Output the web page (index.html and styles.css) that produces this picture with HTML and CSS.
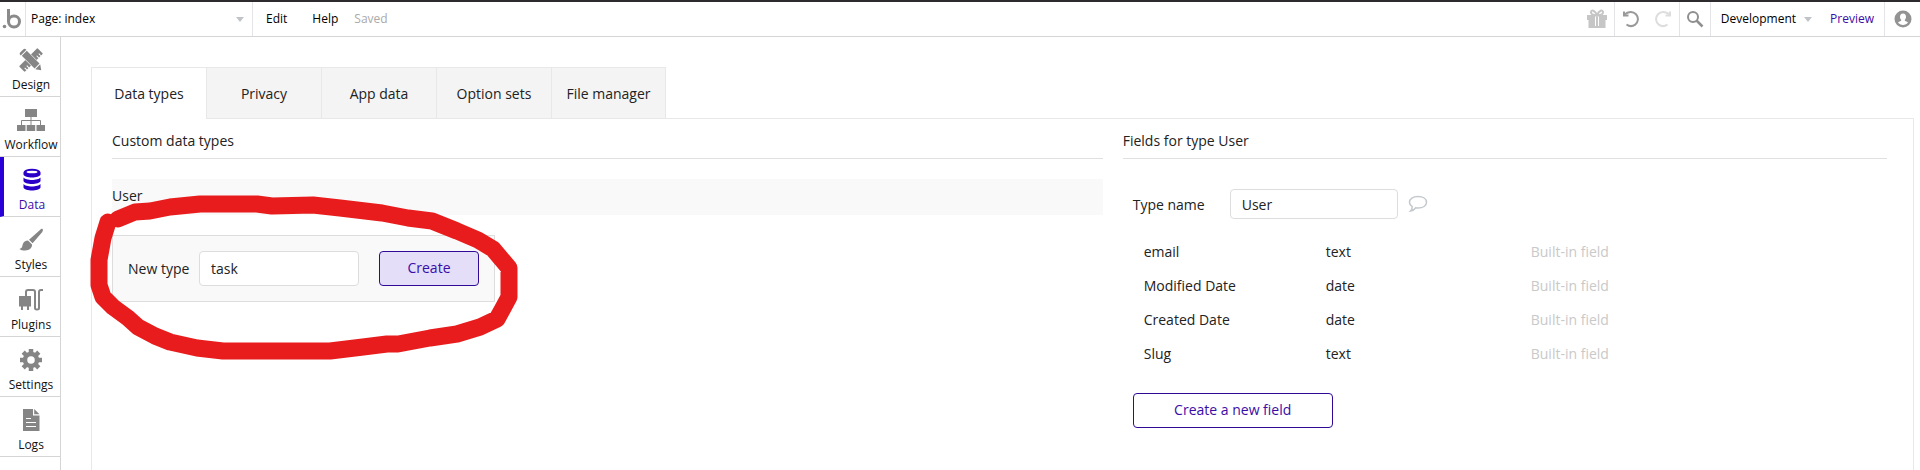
FILE: index.html
```html
<!DOCTYPE html>
<html lang="en">
<head>
<meta charset="utf-8">
<title>Data</title>
<link rel="stylesheet" href="styles.css">
</head>
<body>
<header class="topbar">
  <a class="logo" href="#" aria-label="Home">
    <svg width="20" height="20" viewBox="0 0 20 20" fill="none" stroke="#8a8a8a" stroke-width="3"><circle cx="12" cy="12.500" r="5.500"/><path d="M6.500 0v13"/><circle cx="2.500" cy="17.500" r="1.800" fill="#8a8a8a" stroke="none"/></svg>
  </a>
  <button class="page-picker" type="button">Page: index<span class="caret"></span></button>
  <nav class="menu">
    <a href="#">Edit</a>
    <a href="#">Help</a>
    <span class="saved">Saved</span>
  </nav>
  <div class="tools">
    <button class="tool gift" type="button" aria-label="Gift">
      <svg width="22" height="20" viewBox="0 0 22 20" fill="#c6c6c6"><path d="M1 6h20v5H1zM2.500 11h17v8h-17z"/><path fill="#fff" d="M9 7.500h4v9.500H9z"/><path d="M10 7.500h2v9.500h-2z"/><path fill="none" stroke="#c6c6c6" stroke-width="2" d="M11 6C9 1.500 5 0 5 3.500 5 5.500 8 6 11 6c3 0 6-.5 6-2.500C17 0 13 1.500 11 6z"/></svg>
    </button>
    <div class="tool-pair">
      <button class="tool" type="button" aria-label="Undo">
        <svg width="18" height="18" viewBox="0 0 18 18" fill="none" stroke="#999" stroke-width="2"><path d="M2.500 4.500C6 1.500 11 1 14 4.200c3 3.300 2.300 8-.8 10.400C10.600 16.500 7 16.300 4.500 14.500"/><path d="M2 1.500v4h4.500"/></svg>
      </button>
      <button class="tool" type="button" aria-label="Redo">
        <svg width="18" height="18" viewBox="0 0 18 18" fill="none" stroke="#ddd" stroke-width="2"><path d="M15.500 4.500C12 1.500 7 1 4 4.200 1 7.500 1.700 12.200 4.800 14.600c2.600 1.900 6.200 1.700 8.700-.1"/><path d="M16 1.500v4h-4.500"/></svg>
      </button>
    </div>
    <button class="tool search" type="button" aria-label="Search">
      <svg width="18" height="18" viewBox="0 0 18 18" fill="none" stroke="#8f8f8f"><circle cx="7" cy="7" r="5" stroke-width="2"/><path d="M10.500 10.500 16.500 16.500" stroke-width="2.500"/></svg>
    </button>
    <button class="version" type="button">Development<span class="caret"></span></button>
    <a class="preview" href="#">Preview</a>
    <button class="tool account" type="button" aria-label="Account">
      <svg width="18" height="18" viewBox="0 0 18 18"><circle cx="9" cy="9" r="8.500" fill="#939393"/><path fill="#fff" d="M9 3.500c2 0 3 1.300 3 3.200 0 1.300-.5 2.300-1.200 3v1l3.200 1.600c-1 1.800-3 2.700-5 2.700s-4-.9-5-2.700l3.200-1.600v-1C6.500 9 6 8 6 6.700c0-1.900 1-3.200 3-3.200z"/></svg>
    </button>
  </div>
</header>
<div class="workspace">
  <nav class="sidebar">
    <a class="side-item" href="#">
      <svg width="24" height="24" viewBox="0 0 24 24" fill="#858585"><g transform="rotate(-45 12 12)"><path d="M-1 9q0-1 1-1h24q1 0 1 1v6q0 1-1 1H0q-1 0-1-1z"/><path stroke="#fff" d="M2 13v3M5 13v3M19 13v3M22 13v3"/></g><g transform="rotate(45 12 12)"><path fill="#fff" d="M4 8h16v8H4z"/><path d="M-1 10q0-2 2-2h.5v8H1q-2 0-2-2zM2.500 8.500h18v7h-18zM21.500 8.500 26.500 12l-5 3.500z"/></g></svg>
      Design</a>
    <a class="side-item" href="#">
      <svg width="28" height="24" viewBox="0 0 28 24" fill="#858585"><path d="M8 1h12v8H8zM0 17h8.500v6H0zM9.700 17h8.500v6H9.700zM19.500 17H28v6h-8.500z"/><path fill="none" stroke="#858585" d="M14 9v8M4.500 17v-4.500h19V17"/></svg>
      Workflow</a>
    <a class="side-item active" href="#" aria-current="page">
      <svg width="20" height="24" viewBox="0 0 20 24" fill="#2a00c8"><ellipse cx="10" cy="4.500" rx="8.500" ry="3.800"/><path d="M1.500 5v1.500c1 4 16 4 17 0V5zM1.500 9.500c2 3.300 15 3.300 17 0V13c-1 4-16 4-17 0zM1.500 16c2 3.300 15 3.300 17 0v3.500c-1 4-16 4-17 0z"/><ellipse cx="10" cy="4" rx="5.500" ry="1.300" fill="#fff"/></svg>
      Data</a>
    <a class="side-item" href="#">
      <svg width="24" height="24" viewBox="0 0 24 24" fill="#858585"><path d="M23.500 1c.8.800.4 2.200-.4 3.200L13.600 15.300 10 11.800 21 2c.8-.8 1.800-1.500 2.500-1z"/><path d="M9 12.600l4 4c.4 3.400-2.800 6-7 5.900-2.200 0-4.200-.6-5.500-1.600 2.800-.4 2.600-2 3.200-4.300.7-2.600 2.800-4 5.300-4z"/></svg>
      Styles</a>
    <a class="side-item" href="#">
      <svg width="26" height="24" viewBox="0 0 26 24" fill="#858585"><path d="M1 8h12v10.500h-2V22H9v-3.500H5V22H3v-3.500H1z"/><path fill="none" stroke="#858585" stroke-width="2" d="M8 9V4q0-2 2-2h5q2 0 2 2v16q0 1.500 2 1.500T21 20V4q0-2 2-2h2"/></svg>
      Plugins</a>
    <a class="side-item" href="#">
      <svg width="24" height="24" viewBox="0 0 24 24" fill="none" stroke="#858585"><circle cx="12" cy="12" r="6" stroke-width="4.500"/><path stroke-width="4.500" d="M12 1v4M12 19v4M1 12h4M19 12h4M4.200 4.200 7 7M17 17l2.800 2.800M4.200 19.800 7 17M17 7l2.800-2.800"/></svg>
      Settings</a>
    <a class="side-item" href="#">
      <svg width="18" height="24" viewBox="0 0 18 24" fill="#858585"><path d="M1 1h10v6.500h6.500V23H1zM12.200 1l5.300 5.300h-5.300z"/><path stroke="#fff" d="M4 10.500h5M4 14.500h10M4 18.500h10"/></svg>
      Logs</a>
  </nav>
  <main class="content">
    <div class="tabs" role="tablist">
      <button class="tab selected" role="tab" aria-selected="true" type="button">Data types</button>
      <button class="tab" role="tab" type="button">Privacy</button>
      <button class="tab" role="tab" type="button">App data</button>
      <button class="tab" role="tab" type="button">Option sets</button>
      <button class="tab" role="tab" type="button">File manager</button>
    </div>
    <div class="panel">
      <section>
        <h2 class="heading">Custom data types</h2>
        <a class="type-row" href="#">User</a>
        <form class="new-type">
          <label for="new-type">New type</label>
          <input class="field new-name" id="new-type" type="text" value="task">
          <button class="button filled" type="button">Create</button>
          <svg class="marker" width="460" height="200" viewBox="0 0 460 200" fill="none" stroke="#e81c1c" stroke-width="17" stroke-linejoin="round" stroke-linecap="round"><path d="M38 49 55 42 70 41 90 37 120 34H177L192 36 233 35 260 38 302 43 328 48 352 51 377 61 398 70 413 79 424 92 429 98V127L422 140 417 149 400 157 377 164 350 168 318 174H307L283 177 250 181H143L117 178 90 172 75 166 58 157 48 148 33 137 23 127 19 115V90L23 68 28 52"/></svg>
        </form>
      </section>
      <section>
        <h2 class="heading">Fields for type User</h2>
        <div class="details">
          <div class="name-row">
            <label for="type-name">Type name</label>
            <input class="field type-name" id="type-name" type="text" value="User">
            <button class="comment" type="button" aria-label="Comment">
              <svg width="20" height="18" viewBox="0 0 20 18" fill="none" stroke="#c3c9cc" stroke-width="1.500"><path d="M10 1.500c5 0 8.500 2.300 8.500 5.700s-3.500 5.700-8.500 5.700c-.8 0-1.500 0-2.200-.2C6.500 14.500 4.800 15.700 2.500 16c1.300-1.300 1.800-2.700 1.700-4.300C2.400 10.500 1.500 9 1.500 7.200c0-3.400 3.500-5.700 8.500-5.700z"/></svg>
            </button>
          </div>
          <table class="fields">
            <tr><td class="col-name">email</td><td class="col-type">text</td><td class="built-in">Built-in field</td></tr>
            <tr><td>Modified Date</td><td>date</td><td class="built-in">Built-in field</td></tr>
            <tr><td>Created Date</td><td>date</td><td class="built-in">Built-in field</td></tr>
            <tr><td>Slug</td><td>text</td><td class="built-in">Built-in field</td></tr>
          </table>
          <button class="button new-field" type="button">Create a new field</button>
        </div>
      </section>
    </div>
  </main>
</div>
</body>
</html>
```
FILE: styles.css
```css
* { box-sizing: border-box; }
body {
  margin: 0;
  min-height: 100vh;
  display: flex;
  flex-direction: column;
  font: 14px/20px "Open Sans", sans-serif;
  color: #222;
  background: #fff;
}
button, input { font: inherit; color: inherit; }
button { padding: 0; border: 0; background: none; }
a { color: inherit; text-decoration: none; }
svg { display: block; flex: none; }

.topbar {
  display: flex;
  height: 37px;
  border-top: 2px solid #2d2b2d;
  border-bottom: 1px solid #d5d5d5;
  font-size: 12px;
  color: #000;
}
.logo { display: flex; align-items: center; width: 26px; padding-left: 2px; border-right: 1px solid #e4e4e8; }
.page-picker {
  display: flex;
  align-items: center;
  justify-content: space-between;
  width: 227px;
  padding: 0 8px 0 5px;
  border-right: 1px solid #e4e4e8;
}
.caret { border: 4px solid transparent; border-top: 5px solid #c0c4c8; border-bottom: 0; }
.menu { display: flex; align-items: center; padding-left: 13px; gap: 25px; }
.saved { color: #aaa; margin-left: -9px; }
.tools { display: flex; margin-left: auto; }
.tool { display: flex; align-items: center; justify-content: center; width: 32px; }
.gift { width: 34px; border-right: 1px solid #e4e4e8; }
.tool-pair { display: flex; width: 65px; border-right: 1px solid #e4e4e8; }
.search { width: 31px; border-right: 1px solid #e4e4e8; }
.version { display: flex; align-items: center; gap: 8px; padding: 0 18px 0 10px; }
.preview { display: flex; align-items: center; padding-right: 10px; border-right: 1px solid #e4e4e8; color: #3a0ca8; }
.account { width: 35px; }

.workspace { display: flex; flex: 1; }
.sidebar { width: 61px; flex: none; border-right: 1px solid #d5d5d5; }
.side-item {
  display: flex;
  flex-direction: column;
  align-items: center;
  gap: 5px;
  height: 60px;
  padding: 11px 0 0 2px;
  border-bottom: 1px solid #d5d5d5;
  font-size: 12px;
  line-height: 16px;
  color: #111;
}
.side-item.active { padding-left: 0; border-left: 4px solid #2a00d8; color: #3a0ca8; }

.content { flex: 1; display: flex; flex-direction: column; padding: 30px 6px 0 30px; }
.tabs { display: flex; }
.tab {
  width: 115px;
  height: 51px;
  padding-top: 2px;
  border: 1px solid #e8e8e8;
  border-width: 1px 0 0 1px;
  background: #f4f4f4;
}
.tab:last-child { border-right-width: 1px; }
.tab.selected { background: #fff; height: 52px; margin-bottom: -1px; padding-top: 0; z-index: 1; }
.panel {
  flex: 1;
  display: grid;
  grid-template-columns: 35fr 27fr;
  gap: 20px;
  padding: 12px 26px 0 20px;
  border: 1px solid #e8e8e8;
  border-bottom: 0;
}
.heading { margin: 0 0 20px; padding-bottom: 7px; border-bottom: 1px solid #e0e0e0; font-size: 14px; font-weight: 400; }
.type-row { display: block; height: 36px; padding-top: 7px; background: #f9f9f9; }
.new-type {
  position: relative;
  display: flex;
  align-items: center;
  width: 383px;
  height: 67px;
  margin-top: 20px;
  padding: 0 15px;
  border: 1px solid #ddd;
  background: #f9f9f9;
}
.field { padding: 0 11px; border: 1px solid #ddd; border-radius: 4px; background: #fff; }
.new-name { width: 160px; height: 35px; margin: 0 20px 0 auto; }
.button { height: 35px; padding-bottom: 2px; border: 1px solid #2e0a96; border-radius: 4px; color: #3a0ca8; }
.filled { width: 100px; background: #e4def8; }
.marker { position: absolute; top: -66px; left: -33px; pointer-events: none; }

.details { padding: 10px 10px 0; }
.name-row { display: flex; align-items: center; }
.name-row label { padding-top: 2px; }
.type-name { width: 168px; height: 30px; margin: 0 10px 0 25px; }
.fields { width: 100%; margin: 16px 0 22px; border-collapse: collapse; }
.fields td { height: 34px; padding: 0; }
.fields td:first-child { padding-left: 11px; }
.col-name { width: 193px; }
.col-type { width: 205px; }
.built-in { color: #c9c9c9; }
.new-field { width: 200px; }
```
